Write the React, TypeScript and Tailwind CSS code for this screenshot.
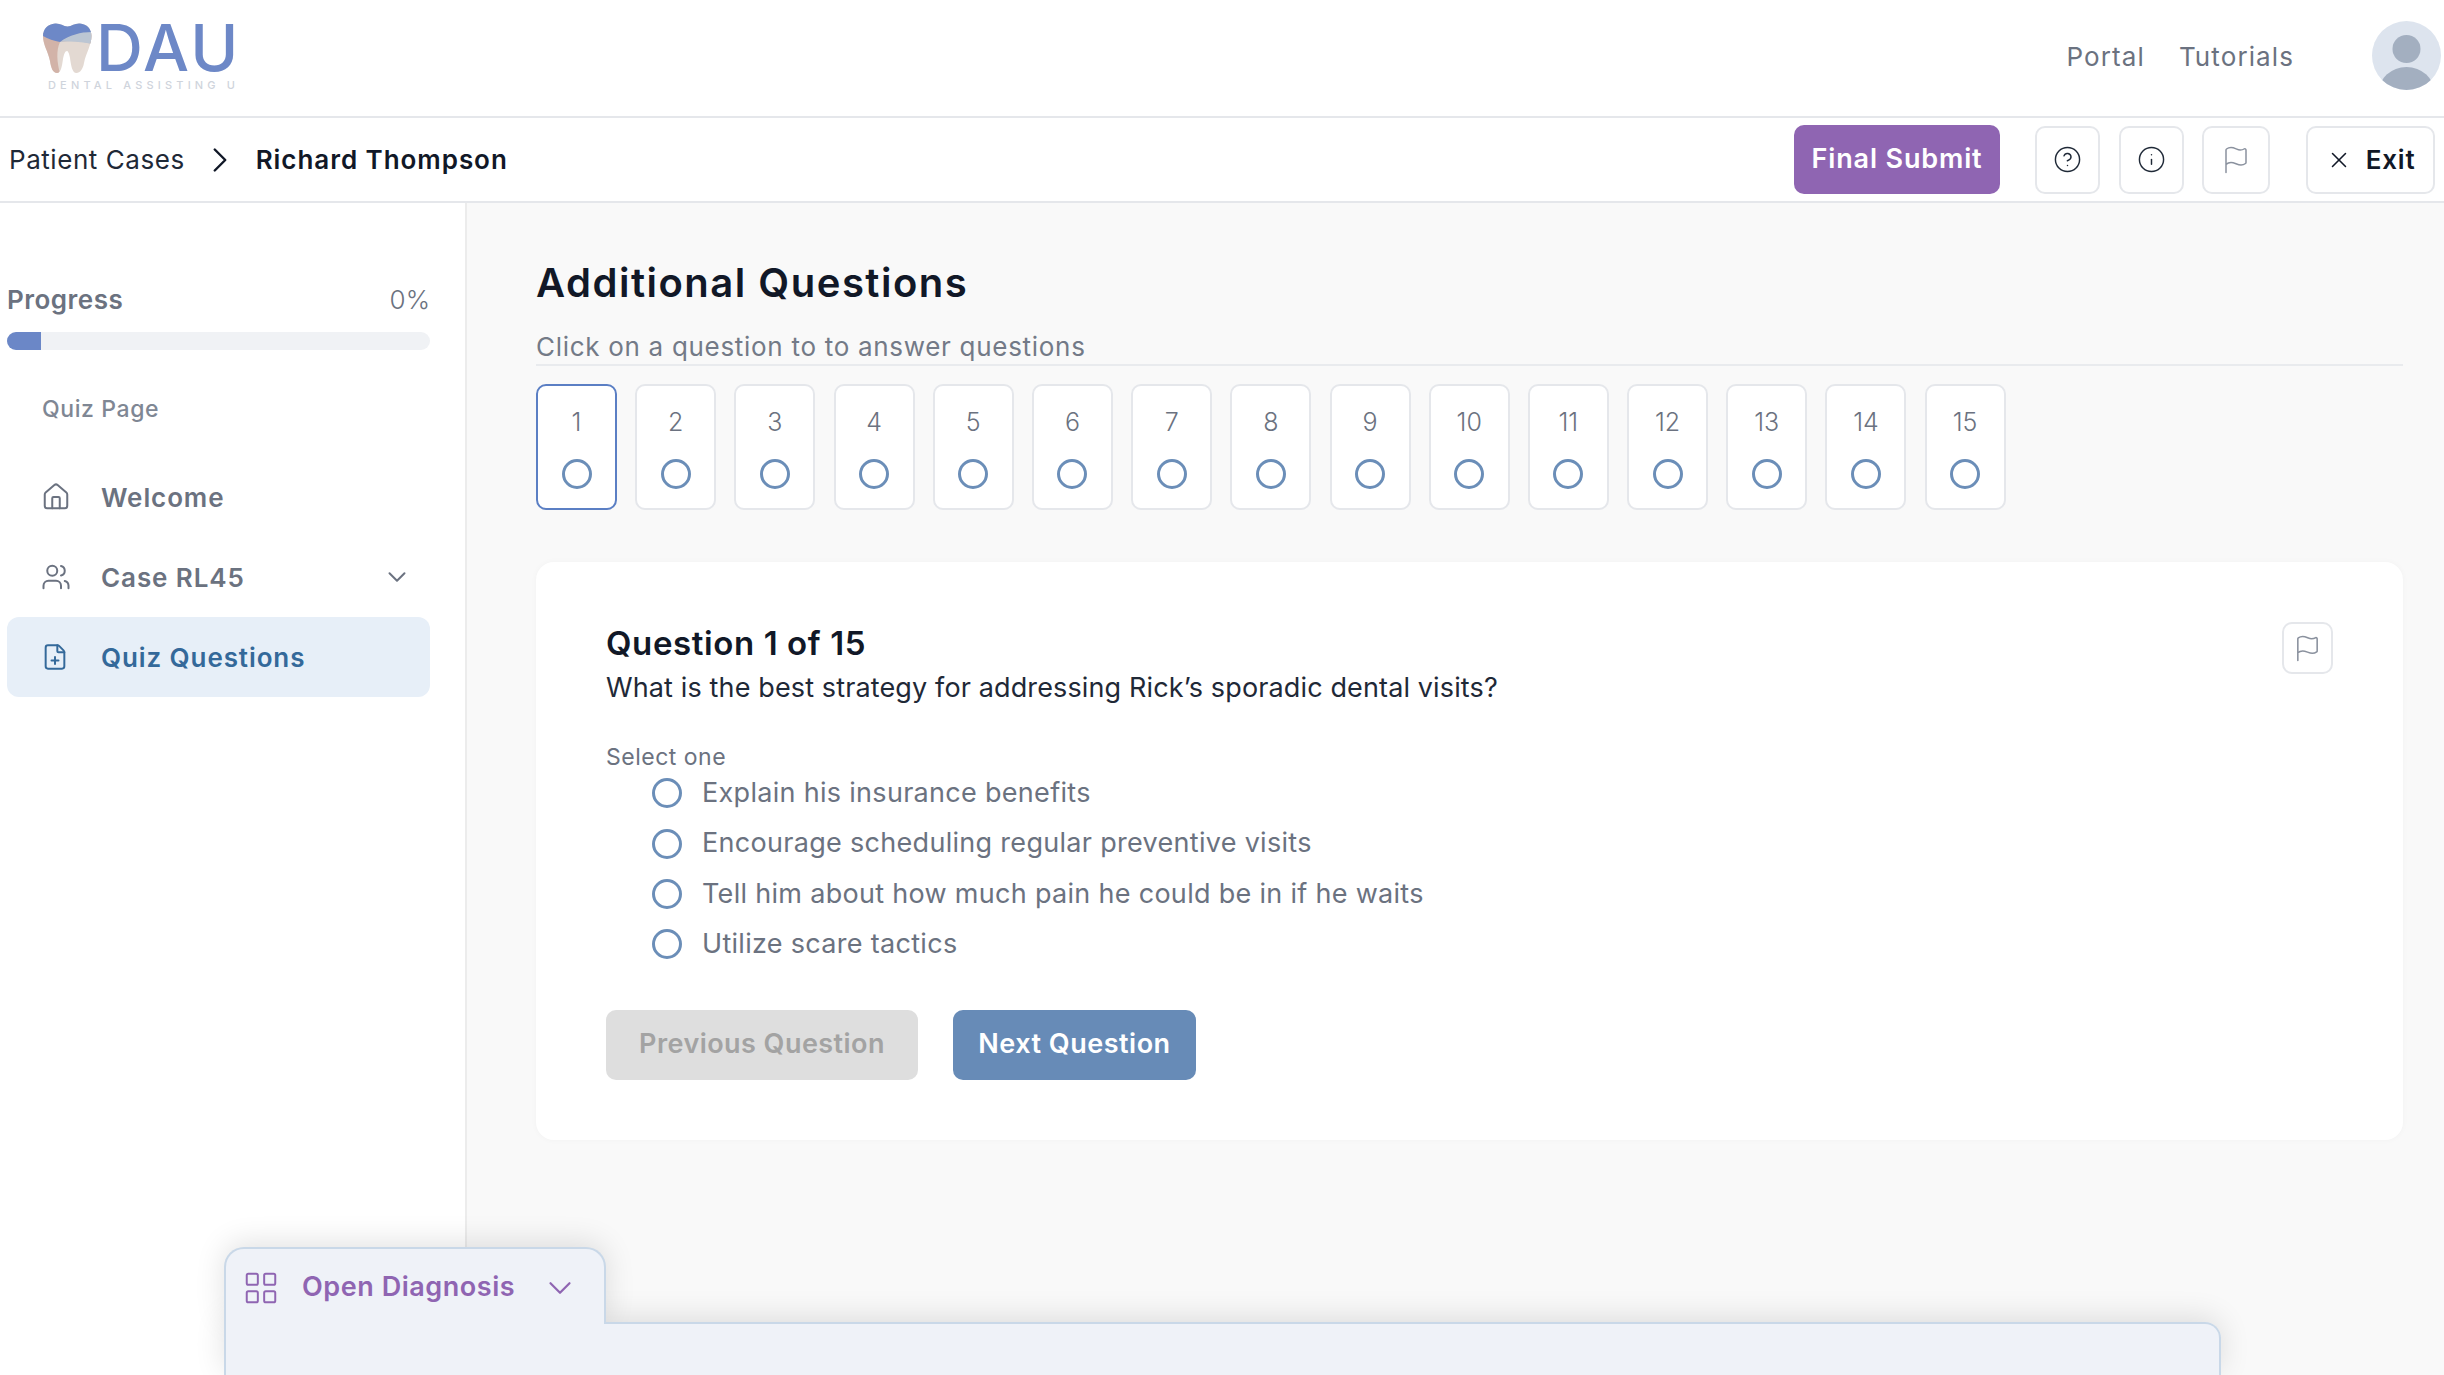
import React from 'react';
import { ChevronDown, ChevronRight, CircleHelp, FilePlus, Flag, House, Info, LayoutGrid, Users, X } from 'lucide-react';

const questions = Array.from({ length: 15 }, (_, i) => i + 1);

const answers = [
  'Explain his insurance benefits',
  'Encourage scheduling regular preventive visits',
  'Tell him about how much pain he could be in if he waits',
  'Utilize scare tactics',
];

const ToothLogo = () => (
  <svg width="49" height="50" viewBox="0 0 49 50">
    <defs>
      <clipPath id="tooth">
        <path d="M12 .5C17 0 20 3 24.5 3.5 29 3 32 0 37 .5 44 1 48.500 6 48.500 13 48.500 22 43 30 41 40 40 46 37 50 33.500 50 29 50 28 42 27 35 26 30 25 28 24 28 22 28 21 31 20 36 19 43 18 50 14 50 10 50 8 45 7 38 5 28 0 22 0 13 0 6 5 1 12 .5Z" />
      </clipPath>
    </defs>
    <g clipPath="url(#tooth)">
      <rect width="49" height="50" fill="#e3d9d2" />
      <path d="M0 10H49V21C40 18 28 17 17 19 13 27 14 40 17 50H0Z" fill="#d2b3a8" />
      <path d="M17 19C24 12 38 9 49 8V21C40 19 28 18 17 19Z" fill="#bcc6d3" />
      <path d="M0 0H49V9C38 9 26 12 17 19 11 18 5 16 0 13Z" fill="#6d88c7" />
    </g>
  </svg>
);

const Avatar = () => (
  <svg width="69" height="69" viewBox="0 0 69 69">
    <clipPath id="avatar">
      <circle cx="34.500" cy="34.500" r="34.500" />
    </clipPath>
    <g clipPath="url(#avatar)">
      <rect width="69" height="69" fill="#dde4ee" />
      <ellipse cx="34.500" cy="28" rx="14" ry="14" fill="#a3afc0" />
      <ellipse cx="34.500" cy="72" rx="28" ry="26" fill="#a3afc0" />
    </g>
  </svg>
);

const IconButton = ({ children, className }: { children: React.ReactNode; className?: string }) => (
  <button className={`flex items-center justify-center h-[68px] rounded-[10px] border-2 border-[#e5e7eb] bg-white ${className}`}>
    {children}
  </button>
);

const NavItem = ({
  icon,
  label,
  active,
  chevron,
}: {
  icon: React.ReactNode;
  label: string;
  active?: boolean;
  chevron?: boolean;
}) => (
  <div
    className={`flex items-center h-[80px] pl-[34px] pr-[18px] rounded-[12px] text-[26px] font-semibold tracking-[0.9px] ${
      active ? 'bg-[#e7eff8] text-[#34699a]' : 'text-[#6b7280]'
    }`}
  >
    <span className="w-[60px] flex items-center">{icon}</span>
    <span className="flex-1">{label}</span>
    {chevron && <ChevronDown size={30} strokeWidth={1.6} className="text-[#6b7280]" />}
  </div>
);

const Sidebar = () => (
  <aside className="w-[467px] shrink-0 bg-white border-r-2 border-[#ececec] pt-[78px] pl-[7px] pr-[35px]">
    <div className="flex items-center justify-between h-[36px] text-[26px] text-[#6b7280]">
      <span className="font-semibold tracking-[0.5px]">Progress</span>
      <span className="font-light">0%</span>
    </div>
    <div className="mt-[15px] h-[18px] rounded-full bg-[#f0f2f5] overflow-hidden">
      <div className="h-full bg-[#6b87c7]" style={{ width: '8%' }} />
    </div>
    <div className="mt-[42px] pl-[35px] h-[34px] flex items-center text-[23px] font-medium tracking-[0.6px] text-[#7f8794]">Quiz Page</div>
    <nav className="mt-[31px] flex flex-col gap-0">
      <NavItem icon={<House size={30} strokeWidth={1.6} />} label="Welcome" />
      <NavItem icon={<Users size={30} strokeWidth={1.6} />} label="Case RL45" chevron />
      <NavItem icon={<FilePlus size={28} strokeWidth={1.7} />} label="Quiz Questions" active />
    </nav>
  </aside>
);

const QuestionCard = () => (
  <section className="relative mt-[52px] h-[578px] rounded-[18px] bg-white pt-[58px] pl-[70px] shadow-[0_0_6px_rgba(0,0,0,0.03)]">
    <button className="absolute top-[60px] right-[70px] w-[51px] h-[52px] flex items-center justify-center rounded-[10px] border-2 border-[#e5e7eb] text-[#8a919e]">
      <Flag size={29} strokeWidth={1.3} />
    </button>
    <h2 className="text-[33px] leading-[46px] font-semibold tracking-[0.6px] text-[#111827]">Question 1 of 15</h2>
    <p className="mt-[3px] text-[27px] leading-[38px] tracking-[0.13px] text-[#1f2937]">What is the best strategy for addressing Rick’s sporadic dental visits?</p>
    <p className="mt-[34px] text-[23px] leading-[32px] tracking-[0.5px] text-[#6b7280]">Select one</p>
    <ul className="pl-[46px] flex flex-col">
      {answers.map((answer) => (
        <li key={answer} className="flex items-center h-[50.400px] -mt-[6px] first:mt-[-5px] mb-[6px] text-[27px] tracking-[0.3px] text-[#6b7280]">
          <span className="w-[30px] h-[30px] rounded-full border-[3px] border-[#6b8eb8] mr-[20px]" />
          {answer}
        </li>
      ))}
    </ul>
    <div className="mt-[34px] flex gap-[35px]">
      <button className="w-[312px] h-[70px] rounded-[10px] bg-[#dedede] text-[27px] font-semibold tracking-[0.45px] text-[#a3a3a3]">Previous Question</button>
      <button className="w-[243px] h-[70px] rounded-[10px] bg-[#678bb7] text-[27px] font-semibold tracking-[0.5px] text-white">Next Question</button>
    </div>
  </section>
);

const DiagnosisDrawer = () => (
  <div className="absolute left-[224px] bottom-0 w-[1997px] h-[128px]">
    {/* shadow sits under both the tab and the panel body */}
    <div className="absolute left-0 right-0 top-[75px] bottom-0 rounded-tr-[16px] shadow-[0_-4px_30px_rgba(0,0,0,0.12)]" />
    <div className="absolute left-0 top-0 w-[382px] h-[77px] pt-[2px] rounded-t-[20px] border-2 border-b-0 border-[#c9d8e8] bg-[#eff2f8] shadow-[0_-4px_30px_rgba(0,0,0,0.12)] flex items-center text-[#8f65b2]">
      <LayoutGrid size={38} strokeWidth={1.25} className="ml-[16px]" />
      <span className="ml-[22px] w-[239px] text-[27px] font-semibold tracking-[0.55px]">Open Diagnosis</span>
      <ChevronDown size={38} strokeWidth={1.4} />
    </div>
    <div className="absolute left-0 right-0 top-[75px] bottom-0 rounded-tr-[16px] border-2 border-b-0 border-[#c9d8e8] bg-[#eff2f8]" />
    <div className="absolute left-[2px] top-[60px] w-[378px] h-[30px] bg-[#eff2f8]" />
  </div>
);

export default function App() {
  return (
    <div className="relative h-[1375px] overflow-hidden flex flex-col bg-white font-['Inter','Liberation_Sans',sans-serif]">
      <header className="h-[118px] shrink-0 flex items-center justify-between border-b-2 border-[#e5e7eb] pr-[3px]">
        <div className="self-start pl-[43px] pt-[23px]">
          <div className="flex items-center gap-[4px] h-[50px]">
            <ToothLogo />
            <span className="text-[65px] leading-[50px] font-medium tracking-[2.5px] text-[#6d88c7]">DAU</span>
          </div>
          <div className="ml-[5px] mt-[7px] text-[11px] leading-[10px] font-medium tracking-[0.38em] text-[#cfd4dc] whitespace-nowrap">DENTAL ASSISTING U</div>
        </div>
        <div className="flex items-center text-[26px] tracking-[1.1px] text-[#6b7280]">
          <a className="-mt-[4px]">Portal</a>
          <a className="ml-[34px] -mt-[4px]">Tutorials</a>
          <div className="ml-[78px] -mt-[6px]">
            <Avatar />
          </div>
        </div>
      </header>

      <div className="h-[85px] shrink-0 flex items-center justify-between border-b-2 border-[#e5e7eb] pl-[9px] pr-[9px]">
        <div className="flex items-center text-[26px]">
          <span className="tracking-[0.55px] text-[#1f2937]">Patient Cases</span>
          <ChevronRight size={42} strokeWidth={1.4} className="ml-[14px] mr-[15px] text-[#111827]" />
          <span className="font-semibold tracking-[0.95px] text-[#111827]">Richard Thompson</span>
        </div>
        <div className="flex items-center">
          <button className="w-[206px] h-[69px] rounded-[10px] bg-[#8f65b2] text-[27px] font-semibold tracking-[0.85px] text-white">Final Submit</button>
          <IconButton className="ml-[35px] w-[65px] text-[#1f2937]">
            <CircleHelp size={29} strokeWidth={1.2} />
          </IconButton>
          <IconButton className="ml-[19px] w-[65px] text-[#1f2937]">
            <Info size={29} strokeWidth={1.2} />
          </IconButton>
          <IconButton className="ml-[18px] w-[68px] text-[#8a919e]">
            <Flag size={30} strokeWidth={1.2} />
          </IconButton>
          <IconButton className="ml-[36px] w-[129px] gap-[14px] text-[26px] font-semibold tracking-[0.8px] text-[#111827]">
            <X size={26} strokeWidth={1.4} />
            Exit
          </IconButton>
        </div>
      </div>

      <div className="flex flex-1 min-h-0">
        <Sidebar />
        <main className="flex-1 bg-[#f9f9f9] pl-[69px] pr-[41px] pt-[57px]">
          <h1 className="text-[40px] leading-[46px] font-semibold tracking-[1.5px] text-[#111827]">Additional Questions</h1>
          <p className="mt-[25px] pb-[1px] border-b-2 border-[#e9ebee] text-[26px] leading-[32px] tracking-[0.7px] text-[#737a87]">Click on a question to to answer questions</p>
          <div className="mt-[18px] flex gap-[18.200px]">
            {questions.map((n) => (
              <div
                key={n}
                className={`w-[81px] h-[126px] rounded-[10px] border-2 bg-white flex flex-col items-center pt-[21px] ${
                  n === 1 ? 'border-[#5b7fc4]' : 'border-[#e5e7eb]'
                }`}
              >
                <span className="text-[25px] leading-[30px] font-light text-[#6b7280]">{n}</span>
                <span className="mt-[22px] w-[30px] h-[30px] rounded-full border-[3px] border-[#6b8eb8]" />
              </div>
            ))}
          </div>
          <QuestionCard />
        </main>
      </div>

      <DiagnosisDrawer />
    </div>
  );
}
